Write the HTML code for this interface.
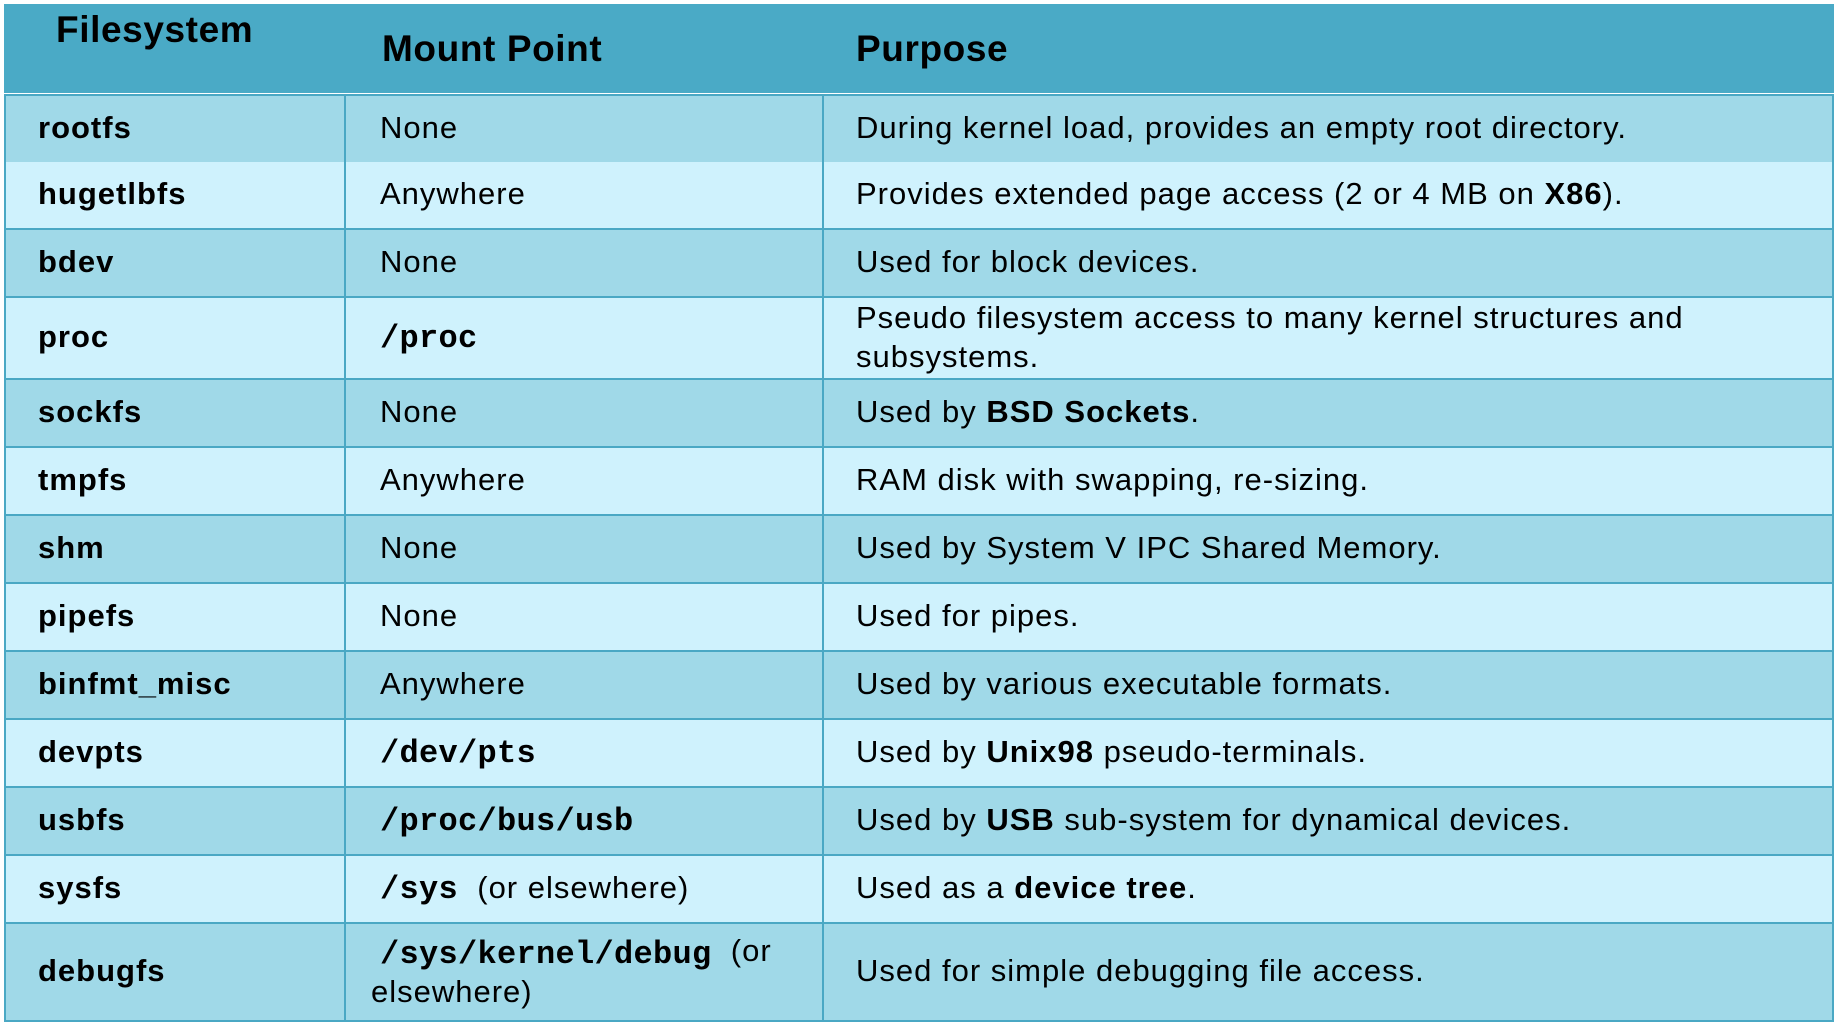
<!DOCTYPE html>
<html><head><meta charset="utf-8"><style>
html,body{margin:0;padding:0;background:#fff;width:1838px;height:1024px;overflow:hidden;font-family:"Liberation Sans",Arial,sans-serif;color:#000}
.hd{position:absolute;left:4px;top:4px;width:1830px;height:89px;background:#4aaac6}
.hd span{position:absolute;font-weight:bold;font-size:37px;letter-spacing:0.6px}
.row{position:absolute;left:4px;width:1826px;border:2px solid #4aa8c4;border-top:none;box-sizing:content-box}
.c{position:absolute;top:0;bottom:0;display:flex;align-items:center;font-size:31px;line-height:39px;letter-spacing:1px;white-space:nowrap;padding-bottom:3px}
.c1{left:0;width:340px;padding-left:32px;box-sizing:border-box;font-weight:bold;border-right:2px solid #4aa8c4}
.c2{left:342px;width:476px;padding-left:32px;box-sizing:border-box;border-right:2px solid #4aa8c4}
.c3{left:820px;right:0;padding-left:30px;box-sizing:border-box}
.m{font-family:"Liberation Mono",monospace;font-weight:bold;font-size:32px;letter-spacing:0.3px;position:relative;top:2px}
.a{background:#a0d9e8}.b{background:#cff2fd}
</style></head><body>
<div class="hd">
<span style="left:52px;top:5px">Filesystem</span>
<span style="left:378px;top:24px">Mount Point</span>
<span style="left:852px;top:24px">Purpose</span>
</div>
<div class="row a" style="top:94px;height:66px;border-top:2px solid #4aa8c4"><div class="c c1">rootfs</div><div class="c c2">None</div><div class="c c3">During kernel load, provides an empty root directory.</div></div>
<div class="row b" style="top:162px;height:66px"><div class="c c1">hugetlbfs</div><div class="c c2">Anywhere</div><div class="c c3">Provides extended page access (2 or 4 MB on&nbsp;<b>X86</b>).</div></div>
<div class="row a" style="top:230px;height:66px"><div class="c c1">bdev</div><div class="c c2">None</div><div class="c c3">Used for block devices.</div></div>
<div class="row b" style="top:298px;height:80px"><div class="c c1">proc</div><div class="c c2"><span class="m">/proc</span></div><div class="c c3">Pseudo filesystem access to many kernel structures and<br>subsystems.</div></div>
<div class="row a" style="top:380px;height:66px"><div class="c c1">sockfs</div><div class="c c2">None</div><div class="c c3">Used by&nbsp;<b>BSD Sockets</b>.</div></div>
<div class="row b" style="top:448px;height:66px"><div class="c c1">tmpfs</div><div class="c c2">Anywhere</div><div class="c c3">RAM disk with swapping, re-sizing.</div></div>
<div class="row a" style="top:516px;height:66px"><div class="c c1">shm</div><div class="c c2">None</div><div class="c c3">Used by System V IPC Shared Memory.</div></div>
<div class="row b" style="top:584px;height:66px"><div class="c c1">pipefs</div><div class="c c2">None</div><div class="c c3">Used for pipes.</div></div>
<div class="row a" style="top:652px;height:66px"><div class="c c1">binfmt_misc</div><div class="c c2">Anywhere</div><div class="c c3">Used by various executable formats.</div></div>
<div class="row b" style="top:720px;height:66px"><div class="c c1">devpts</div><div class="c c2"><span class="m">/dev/pts</span></div><div class="c c3">Used by&nbsp;<b>Unix98</b>&nbsp;pseudo-terminals.</div></div>
<div class="row a" style="top:788px;height:66px"><div class="c c1">usbfs</div><div class="c c2"><span class="m">/proc/bus/usb</span></div><div class="c c3">Used by&nbsp;<b>USB</b>&nbsp;sub-system for dynamical devices.</div></div>
<div class="row b" style="top:856px;height:66px"><div class="c c1">sysfs</div><div class="c c2"><span class="m">/sys</span>&nbsp;&nbsp;(or elsewhere)</div><div class="c c3">Used as a&nbsp;<b>device tree</b>.</div></div>
<div class="row a" style="top:924px;height:96px"><div class="c c1">debugfs</div><div class="c c2" style="padding-left:23px"><div><span class="m" style="padding-left:9px">/sys/kernel/debug</span>&nbsp;&nbsp;(or<br>elsewhere)</div></div><div class="c c3">Used for simple debugging file access.</div></div>
</body></html>
